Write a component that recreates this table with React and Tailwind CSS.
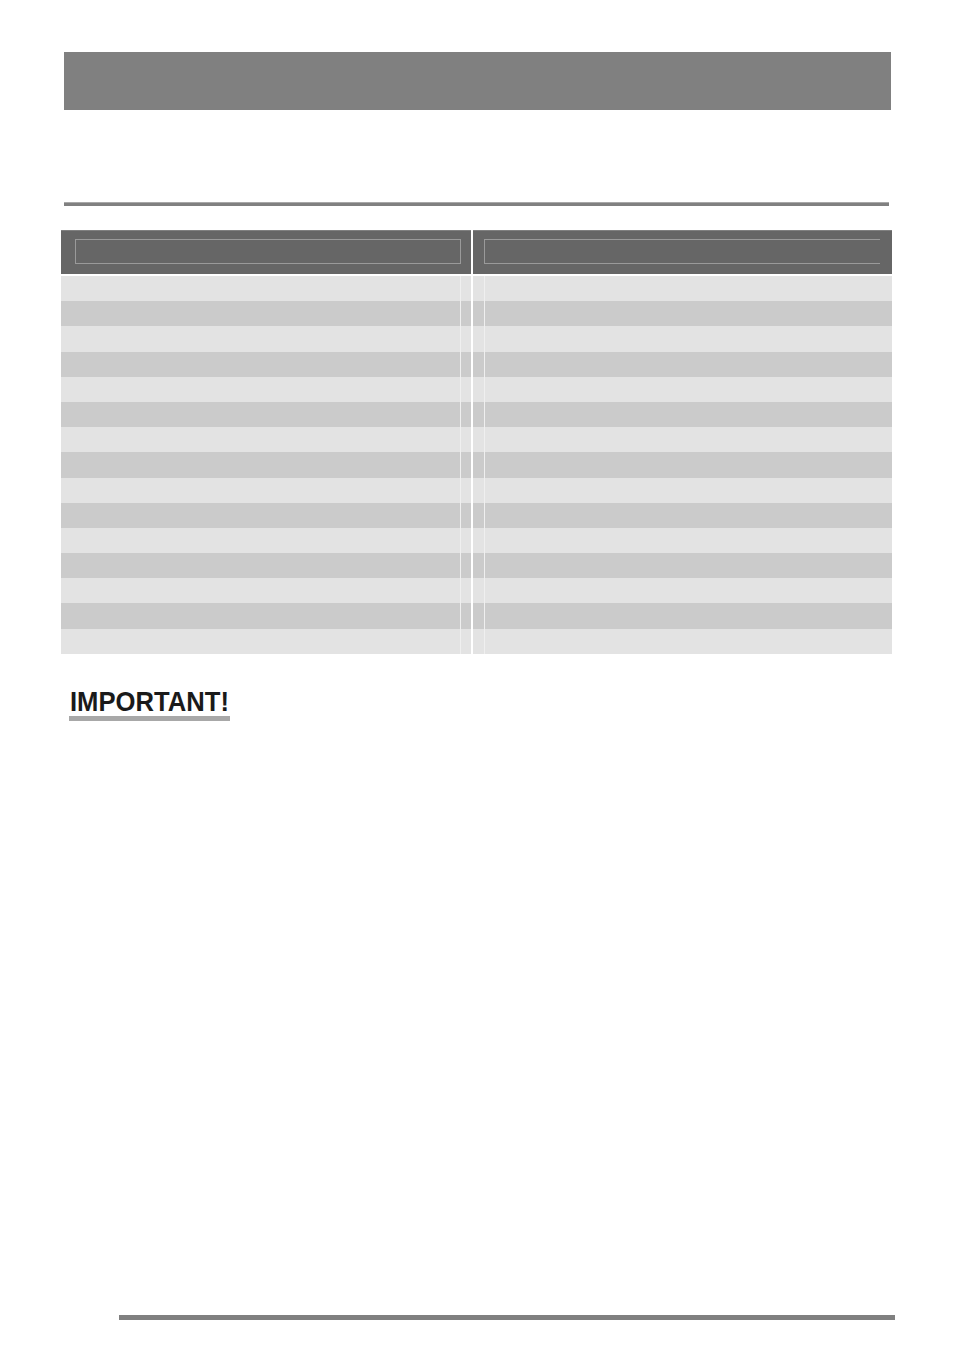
import React from "react";

const rows = Array.from({ length: 15 }, (_, i) => i);

const App = () => {
  return (
    <div className="w-[954px] h-[1355px] bg-white flex flex-col font-['Liberation_Sans',Arial,sans-serif]">
      {/* top title bar */}
      <div className="mt-[52px] ml-[64px] w-[827px] h-[58px] bg-[#808080]" />

      {/* section rule */}
      <div className="mt-[92px] ml-[64px] w-[825px] h-[4px] bg-[#808080] border-t border-[#a8a8a8]" />

      {/* table */}
      <div className="mt-[24px] ml-[61px] w-[831px]">
        <div className="flex gap-[2px] h-[44px]">
          <div className="w-[410px] bg-[#666666] border-t border-[#808080] pt-[8px] pl-[14px]">
            <div className="w-[386px] h-[25px] border border-[#9a9a9a]" />
          </div>
          <div className="flex-1 bg-[#666666] border-t border-[#808080] pt-[8px] pl-[11px]">
            <div className="w-[396px] h-[25px] border-y border-l border-[#9a9a9a]" />
          </div>
        </div>

        <div className="mt-[2px] flex flex-col">
          {rows.map((i) => (
            <div key={i} className="flex gap-[2px] h-[25.2px]">
              <div className={`w-[410px] flex ${i % 2 === 0 ? "bg-[#e3e3e3]" : "bg-[#cbcbcb]"}`}>
                <div className="w-[399px]" />
                <div className="w-px bg-[#efefef]" />
              </div>
              <div className={`flex-1 flex ${i % 2 === 0 ? "bg-[#e3e3e3]" : "bg-[#cbcbcb]"}`}>
                <div className="w-[11px]" />
                <div className="w-px bg-[#efefef]" />
              </div>
            </div>
          ))}
        </div>
      </div>

      {/* important note */}
      <div className="mt-[34px] ml-[69px] w-[161px] flex flex-col">
        <div className="h-[28px] pl-[1px]">
          <span className="inline-block origin-left scale-x-[0.915] text-[28px] leading-none font-bold text-[#1a1a1a] whitespace-nowrap">
            IMPORTANT!
          </span>
        </div>
        <div className="h-[5px] bg-[#a8a8a8]" />
      </div>

      {/* footer rule */}
      <div className="mt-[594px] ml-[119px] w-[776px] h-[5px] bg-[#808080]" />
    </div>
  );
};

export default App;
